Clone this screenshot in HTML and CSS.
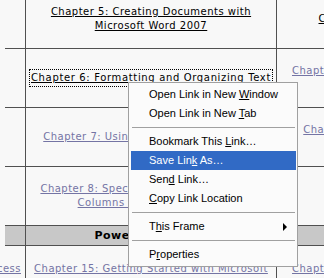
FILE: index.html
```html
<!DOCTYPE html>
<html>
<head>
<meta charset="utf-8">
<link rel="stylesheet" href="styles.css">
</head>
<body>
<div class="page">
  <div class="grid">
    <div class="cell c0"></div>
    <div class="cell c1"><a class="lnk black" href="#">Chapter 5: Creating Documents with<br>Microsoft Word 2007</a></div>
    <div class="cell c2"><a class="lnk black" href="#">Chapter 13: Creating Templates</a></div>

    <div class="cell c0"></div>
    <div class="cell c1"><a class="lnk black focus" href="#">Chapter 6: Formatting and Organizing Text</a></div>
    <div class="cell c2"><a class="lnk" href="#">Chapter 14: Working with Mail Merge and<br>Labels</a></div>

    <div class="cell c0"></div>
    <div class="cell c1"><a class="lnk" href="#">Chapter 7: Using Tables and Text Boxes</a></div>
    <div class="cell c2"><a class="lnk" href="#">Chapter 15: Creating Web Pages with<br>Word</a></div>

    <div class="cell c0"></div>
    <div class="cell c1"><a class="lnk" href="#">Chapter 8: Special Page Formatting with<br>Columns and Page Borders</a></div>
    <div class="cell c2"><a class="lnk" href="#">Chapter 16: Collaborating on<br>Documents</a></div>

    <div class="cell c0 head"></div>
    <div class="cell c1 head"><b>PowerPoint 2007</b></div>
    <div class="cell c2 head"><b>Excel 2007 Essentials</b></div>

    <div class="cell c0 last"><a class="lnk over" href="#">Microsoft Access</a></div>
    <div class="cell c1 last"><a class="lnk" href="#">Chapter 15: Getting Started with Microsoft</a></div>
    <div class="cell c2 last"><a class="lnk" href="#">Chapter 1: Getting Started with Microsoft</a></div>
  </div>

  <div class="menu">
    <div class="item"><span>Open Link in New <u>W</u>indow</span></div>
    <div class="item"><span>Open Link in New <u>T</u>ab</span></div>
    <div class="sep"></div>
    <div class="item"><span>Bookmark This <u>L</u>ink…</span></div>
    <div class="item sel"><span>Save Lin<u>k</u> As…</span></div>
    <div class="item"><span>Sen<u>d</u> Link…</span></div>
    <div class="item"><span><u>C</u>opy Link Location</span></div>
    <div class="sep"></div>
    <div class="item"><span>T<u>h</u>is Frame</span><span class="arrow"></span></div>
    <div class="sep"></div>
    <div class="item"><span>P<u>r</u>operties</span></div>
  </div>
</div>
</body>
</html>
```
FILE: styles.css
```css
html, body {
  margin: 0;
  padding: 0;
  background: #f8f8f8;
  overflow: hidden;
}
.page {
  position: relative;
  width: 324px;
  height: 278px;
  overflow: hidden;
  font-family: "DejaVu Sans", Verdana, sans-serif;
  font-size: 10px;
  letter-spacing: 0.5px;
}
.grid {
  display: grid;
  grid-template-columns: 21px 251px 257px;
  grid-template-rows: 59px 59px 59px 59px 20px 40px;
  margin-left: 5px;
  margin-top: -10px;
  width: 529px;
}
.cell {
  box-sizing: border-box;
  border-bottom: 1px solid #505050;
  display: flex;
  align-items: center;
  justify-content: center;
  text-align: center;
  line-height: 14px;
  white-space: nowrap;
}
.c0, .c1 {
  border-right: 1px solid #505050;
}
.last {
  border-bottom: none;
  align-items: flex-start;
  padding-top: 16px;
}
.head {
  background: #c8c8c8;
}
.head b {
  font-size: 11px;
  font-weight: bold;
  letter-spacing: 0.5px;
  color: #000;
}
.c0.last {
  justify-content: flex-end;
  padding-right: 4px;
}
.lnk {
  color: #7474a4;
  text-decoration: underline;
}
.lnk.black {
  color: #000;
}
.focus {
  letter-spacing: 0.65px;
  outline: 1px dotted #000;
  outline-offset: 1px;
}
.menu {
  position: absolute;
  left: 128px;
  top: 82px;
  width: 170px;
  box-sizing: border-box;
  background: #fbfbfb;
  border: 1px solid #a0a0a0;
  padding: 2px 1px 2px 2px;
  font-family: "Liberation Sans", Arial, sans-serif;
  font-size: 11px;
  letter-spacing: 0;
  color: #000;
}
.item {
  height: 19px;
  line-height: 19px;
  padding-left: 18px;
  padding-right: 9px;
  display: flex;
  align-items: center;
  white-space: pre;
}
.item.sel {
  background: #316ac5;
  color: #fff;
}
.sep {
  height: 9px;
  display: flex;
  align-items: center;
  padding: 0 1px;
}
.sep::before {
  content: "";
  display: block;
  flex: 1;
  height: 1px;
  background: #a0a0a0;
}
.arrow {
  margin-left: auto;
  width: 0;
  height: 0;
  border-left: 4px solid #000;
  border-top: 4px solid transparent;
  border-bottom: 4px solid transparent;
}
```
